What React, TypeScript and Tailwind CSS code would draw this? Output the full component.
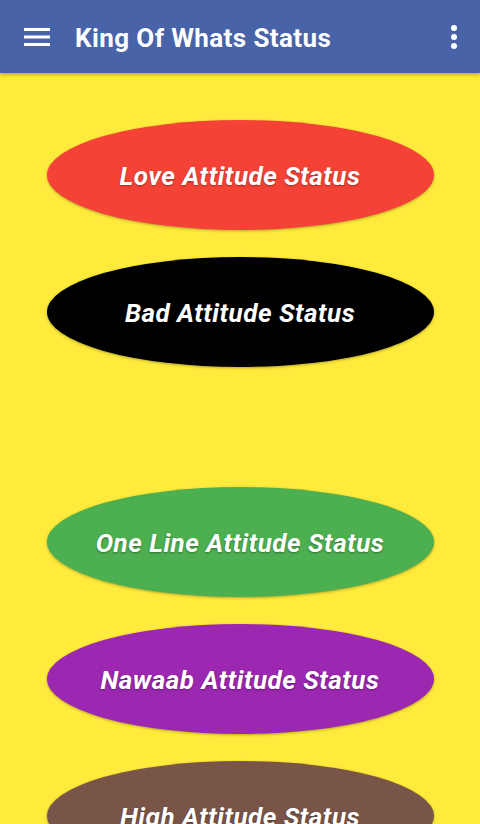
import React from 'react';

const buttons = [
  { label: 'Love Attitude Status', color: 'bg-[#f44336]' },
  { label: 'Bad Attitude Status', color: 'bg-black' },
  { label: 'One Line Attitude Status', color: 'bg-[#4caf50]', spaced: true },
  { label: 'Nawaab Attitude Status', color: 'bg-[#9c27b0]' },
  { label: 'High Attitude Status', color: 'bg-[#795548]' },
];

const App = () => {
  return (
    <div className="w-[480px] h-[824px] overflow-hidden bg-[#ffeb3b] flex flex-col" style={{ fontFamily: 'Roboto, sans-serif' }}>
      <header className="h-[73px] shrink-0 bg-[#4863a8] flex items-center pl-[24px] pr-[22px] shadow-[0_2px_3px_rgba(0,0,0,0.25)] relative z-10">
        <svg width="26" height="20" viewBox="0 0 26 20" className="shrink-0">
          <rect x="0" y="1" width="26" height="3" fill="#fff" />
          <rect x="0" y="8.5" width="26" height="3" fill="#fff" />
          <rect x="0" y="16" width="26" height="3" fill="#fff" />
        </svg>
        <h1 className="ml-[25px] mt-[2px] text-white text-[26px] font-bold tracking-[0.4px] flex-1 leading-none">King Of Whats Status</h1>
        <svg width="8" height="26" viewBox="0 0 8 26">
          <circle cx="4" cy="4" r="3" fill="#fff" />
          <circle cx="4" cy="13" r="3" fill="#fff" />
          <circle cx="4" cy="22" r="3" fill="#fff" />
        </svg>
      </header>
      <main className="flex flex-col items-center pt-[47px]">
        {buttons.map((b) => (
          <button
            key={b.label}
            type="button"
            className={`${b.color} ${b.spaced ? 'mt-[120px]' : 'mt-[27px] first:mt-0'} w-[387px] h-[110px] shrink-0 rounded-[50%] flex items-center justify-center pt-[2px] text-white text-[26px] tracking-[0.5px] font-bold italic shadow-[0_1px_3px_rgba(0,0,0,0.3)] [text-shadow:0_1px_2px_rgba(0,0,0,0.35)]`}
          >
            {b.label}
          </button>
        ))}
      </main>
    </div>
  );
};

export default App;
